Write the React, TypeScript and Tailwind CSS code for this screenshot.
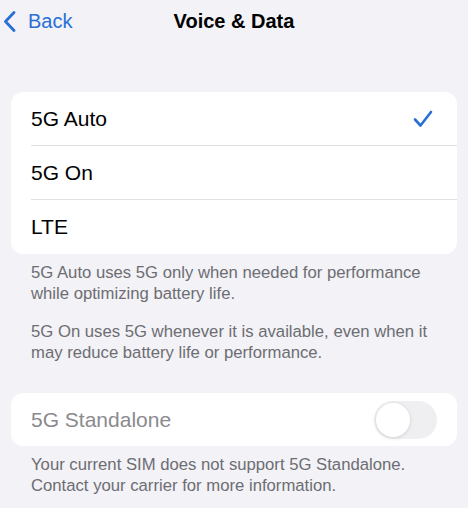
import React from 'react';

const font = { fontFamily: '"Liberation Sans", Arial, sans-serif' };

const options = ['5G Auto', '5G On', 'LTE'];

const App: React.FC = () => {
  const selected = '5G Auto';

  return (
    <div className="w-[468px] h-[508px] bg-[#f2f2f7] overflow-hidden" style={font}>
      {/* nav bar */}
      <div className="h-[42px] grid grid-cols-[1fr_auto_1fr] items-center">
        <div className="flex items-center pl-[3px] text-[#2a6fd4]">
          <svg width="13" height="21" viewBox="0 0 13 21" fill="none">
            <path d="M11 1.5 L2.5 10.5 L11 19.5" stroke="currentColor" strokeWidth="2.8" strokeLinecap="round" strokeLinejoin="round" />
          </svg>
          <span className="ml-[12px] text-[20px] leading-none">Back</span>
        </div>
        <h1 className="text-[20px] font-bold text-black leading-none">Voice &amp; Data</h1>
        <div />
      </div>

      {/* network mode */}
      <div className="mt-[50px] mx-[11px] bg-white rounded-[12px] overflow-hidden">
        {options.map((opt, i) => (
          <div key={opt} className="pl-[20px]">
            <div
              className={`h-[54px] flex items-center justify-between pr-[24px] ${
                i < options.length - 1 ? 'border-b border-[#e2e2e6]' : ''
              }`}
            >
              <span className="text-[21px] text-black">{opt}</span>
              {opt === selected && (
                <svg width="20" height="18" viewBox="0 0 20 18" fill="none">
                  <path d="M2 9.5 L7.5 15.5 L18 2" stroke="#2a6fd4" strokeWidth="2.6" strokeLinecap="round" strokeLinejoin="round" />
                </svg>
              )}
            </div>
          </div>
        ))}
      </div>

      <div className="mt-[8px] pl-[31px] pr-[30px] text-[16.7px] leading-[21px] text-[#6d6d72]">
        <p>5G Auto uses 5G only when needed for performance while optimizing battery life.</p>
        <p className="mt-[17px]">5G On uses 5G whenever it is available, even when it may reduce battery life or performance.</p>
      </div>

      {/* standalone */}
      <div className="mt-[30px] mx-[11px] h-[53px] bg-white rounded-[12px] flex items-center justify-between pl-[20px] pr-[20px]">
        <span className="text-[21px] text-[#8a8a8e]">5G Standalone</span>
        <div className="w-[63px] h-[38px] rounded-full bg-[#efeff2] p-[2px] flex items-center">
          <div className="w-[34px] h-[34px] rounded-full bg-white shadow-[0_1px_4px_rgba(0,0,0,0.12)]" />
        </div>
      </div>

      <div className="mt-[8px] pl-[31px] pr-[30px] text-[16.7px] leading-[21px] text-[#6d6d72]">
        <p>Your current SIM does not support 5G Standalone. Contact your carrier for more information.</p>
      </div>
    </div>
  );
};

export default App;
